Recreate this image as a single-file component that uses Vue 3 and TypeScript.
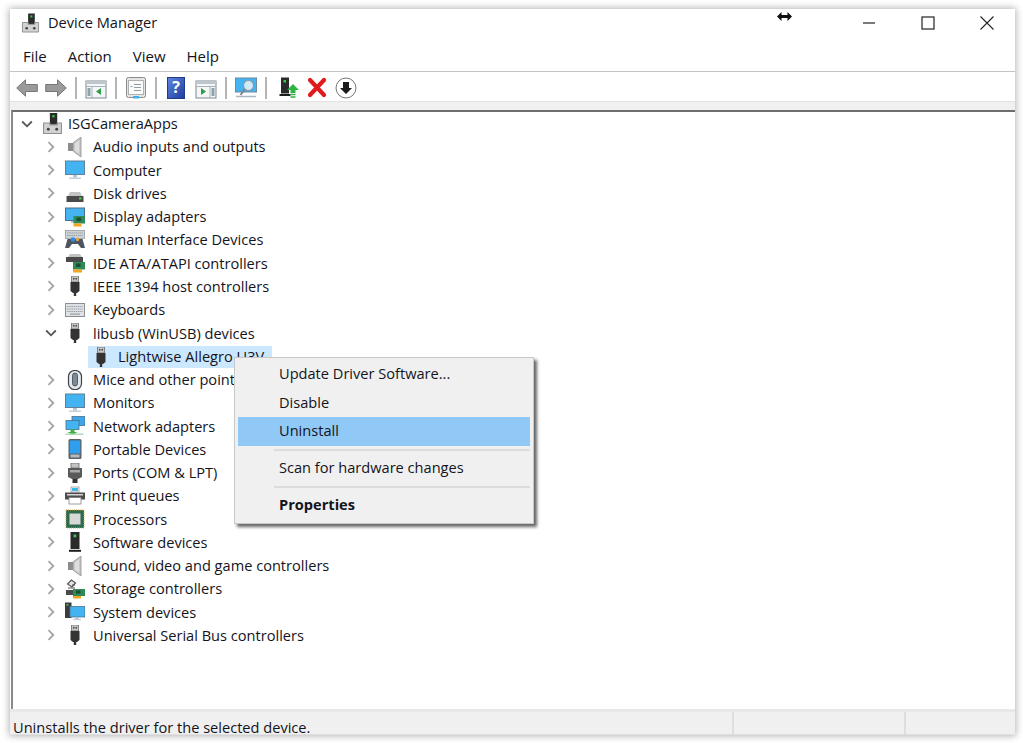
<script setup lang="ts">
interface Row { label: string; icon: string; level: number; open?: boolean; selected?: boolean }
const rows: Row[] = [
  { label: 'ISGCameraApps', icon: 'pc', level: 0, open: true },
  { label: 'Audio inputs and outputs', icon: 'speaker', level: 1 },
  { label: 'Computer', icon: 'monitor', level: 1 },
  { label: 'Disk drives', icon: 'disk', level: 1 },
  { label: 'Display adapters', icon: 'display', level: 1 },
  { label: 'Human Interface Devices', icon: 'hid', level: 1 },
  { label: 'IDE ATA/ATAPI controllers', icon: 'ide', level: 1 },
  { label: 'IEEE 1394 host controllers', icon: 'usb', level: 1 },
  { label: 'Keyboards', icon: 'keyboard', level: 1 },
  { label: 'libusb (WinUSB) devices', icon: 'usb', level: 1, open: true },
  { label: 'Lightwise Allegro U3V', icon: 'usb', level: 2, selected: true },
  { label: 'Mice and other pointing devices', icon: 'mouse', level: 1 },
  { label: 'Monitors', icon: 'monitor', level: 1 },
  { label: 'Network adapters', icon: 'network', level: 1 },
  { label: 'Portable Devices', icon: 'portable', level: 1 },
  { label: 'Ports (COM & LPT)', icon: 'ports', level: 1 },
  { label: 'Print queues', icon: 'printer', level: 1 },
  { label: 'Processors', icon: 'cpu', level: 1 },
  { label: 'Software devices', icon: 'software', level: 1 },
  { label: 'Sound, video and game controllers', icon: 'speaker', level: 1 },
  { label: 'Storage controllers', icon: 'storage', level: 1 },
  { label: 'System devices', icon: 'system', level: 1 },
  { label: 'Universal Serial Bus controllers', icon: 'usb', level: 1 },
]
const menus = ['File', 'Action', 'View', 'Help']
const tools = [
  { icon: 't-back' }, { icon: 't-fwd', cls: 'ml1' }, { sep: true },
  { icon: 't-panel' }, { sep: true },
  { icon: 't-props' }, { sep: true },
  { icon: 't-help' }, { icon: 't-panel2', cls: 'ml2' }, { sep: true },
  { icon: 't-scan' }, { sep: true },
  { icon: 't-update', cls: 'ml3' }, { icon: 't-x' }, { icon: 't-down', cls: 'ml1' },
]
</script>

<template>
  <div class="page">
    <svg width="0" height="0" class="defs">
      <defs>
        <linearGradient id="helpg" x1="0" y1="0" x2="1" y2="1">
          <stop offset="0" stop-color="#5f86e0"/><stop offset="1" stop-color="#1d3c9c"/>
        </linearGradient>
        <symbol id="pc" viewBox="0 0 20 20">
          <rect x="7.500" y="0" width="7" height="11" fill="#2b2b2b"/><rect x="9.800" y="2" width="2.200" height="2.200" fill="#35c24a"/>
          <path d="M1.500 9.500h6v2h7v-2h4v10h-17z" fill="#d2d2d2" stroke="#8f8f8f"/><circle cx="6" cy="15.500" r="1.400" fill="#444"/><circle cx="14" cy="15.500" r="1.400" fill="#444"/>
        </symbol>
        <symbol id="speaker" viewBox="0 0 20 20">
          <rect x="3" y="6" width="5" height="8" fill="#8d8d8d"/><path d="M8 6l8-6v20l-8-6z" fill="#c9c9c9" stroke="#8e8e8e" stroke-width=".8"/><path d="M10 6.500l4-3v13l-4-3z" fill="#dedede"/>
        </symbol>
        <symbol id="monitor" viewBox="0 0 20 20">
          <rect x="0" y="0.500" width="20" height="14.500" fill="#5f819a"/><rect x="1" y="1.500" width="18" height="12.500" fill="#44b3f2"/>
          <rect x="8" y="15" width="4" height="2.500" fill="#b9c6cf"/><rect x="4" y="17.500" width="12" height="1.500" fill="#c6d0d6"/>
        </symbol>
        <symbol id="disk" viewBox="0 0 20 20">
          <path d="M3 13l2-4h10l2 4z" fill="#c4c4c4"/><path d="M1.500 13h17v6h-17z" fill="#4a4a4a"/><rect x="14" y="14.500" width="2.500" height="2" fill="#3ed04e"/>
        </symbol>
        <symbol id="display" viewBox="0 0 20 20">
          <rect x="0" y="0.500" width="20" height="13.500" fill="#4a6d88"/><rect x="1" y="1.500" width="18" height="11.500" fill="#44b3f2"/><rect x="6" y="14" width="4" height="2" fill="#b9c6cf"/>
          <rect x="8.500" y="9" width="11.500" height="7.500" fill="#2f8a58"/><rect x="11.500" y="10.500" width="4.500" height="3.500" fill="#1a4f33"/><rect x="8.500" y="16.500" width="8" height="3" fill="#f2a51e"/>
        </symbol>
        <symbol id="hid" viewBox="0 0 20 20">
          <rect x="0.500" y="0.500" width="19" height="8" fill="#cdd2d6" stroke="#8b9097" stroke-width=".7"/><path d="M2 3h16M2 5.500h16" stroke="#9aa0a6" stroke-dasharray="1.500 .7"/>
          <path d="M0 18l2.500-9h15l2.500 9h-4l-3-4H7l-3 4z" fill="#4d5660"/><circle cx="8" cy="9.500" r="2.300" fill="#2f8ce0"/><circle cx="12.500" cy="9.500" r="1.700" fill="#e6a23c"/>
        </symbol>
        <symbol id="ide" viewBox="0 0 20 20">
          <path d="M3 4l2-3h10l2 3z" fill="#c2c2c2"/><rect x="1" y="4" width="17" height="5" fill="#4a4a4a"/>
          <rect x="8" y="9" width="12" height="7.500" fill="#2f8a58"/><rect x="11" y="10.500" width="4.500" height="3.500" fill="#1a4f33"/><rect x="8" y="16.500" width="9" height="3" fill="#f2a51e"/>
        </symbol>
        <symbol id="usb" viewBox="0 0 20 20">
          <rect x="6.500" y="0" width="7" height="6" fill="#c4c4c4" stroke="#6f6f6f" stroke-width=".8"/><rect x="8" y="2" width="1.500" height="1.500" fill="#444"/><rect x="10.500" y="2" width="1.500" height="1.500" fill="#444"/>
          <path d="M5.500 6h9v9l-2.500 2H8l-2.500-2z" fill="#333"/><rect x="8.800" y="17" width="2.400" height="3" fill="#333"/>
        </symbol>
        <symbol id="keyboard" viewBox="0 0 20 20">
          <rect x="0.500" y="3.500" width="19" height="13" fill="#dfe2e5" stroke="#8c9096"/>
          <path d="M2 6.500h16M2 9h16M2 11.500h16" stroke="#9aa0a6" stroke-dasharray="1.500 .7"/><rect x="5" y="13.500" width="10" height="1.200" fill="#9aa0a6"/>
        </symbol>
        <symbol id="mouse" viewBox="0 0 20 20">
          <rect x="3.500" y="0.500" width="13" height="19" rx="6" fill="#e5e8ea" stroke="#3e444b" stroke-width="1.200"/>
          <rect x="7.500" y="3" width="5" height="13" rx="2.500" fill="#7b8a99" stroke="#3e444b" stroke-width=".8"/>
        </symbol>
        <symbol id="network" viewBox="0 0 20 20">
          <rect x="7" y="0.500" width="13" height="9" fill="#3fa4e8" stroke="#46708e" stroke-width=".8"/>
          <rect x="1" y="4.500" width="13" height="9" fill="#44b3f2" stroke="#46708e" stroke-width=".8"/>
          <path d="M5.500 13.500h4v2.500h3l-5 3-5-3h3z" fill="#3cb54a"/><rect x="0.500" y="17.500" width="18" height="1.500" fill="#b4d8b8"/>
        </symbol>
        <symbol id="portable" viewBox="0 0 20 20">
          <rect x="3.500" y="0" width="13" height="20" rx="1.500" fill="#5b6268"/><rect x="4.800" y="1.500" width="10.400" height="13" fill="#2f9eef"/><rect x="5.500" y="15.500" width="9" height="3" fill="#b5bbc0"/>
        </symbol>
        <symbol id="ports" viewBox="0 0 20 20">
          <rect x="6" y="0" width="8" height="5" fill="#c4c4c4" stroke="#666" stroke-width=".8"/>
          <path d="M3 5h14v9l-4 2H7l-4-2z" fill="#5a5a5a"/><rect x="5" y="7" width="10" height="2.500" fill="#a8a8a8"/><rect x="7.500" y="16" width="5" height="4" fill="#333"/>
        </symbol>
        <symbol id="printer" viewBox="0 0 20 20">
          <rect x="6" y="1" width="8" height="5" fill="#fff" stroke="#8b8b8b" stroke-width=".7"/><rect x="7" y="2" width="6" height="3" fill="#3cb9e8"/>
          <path d="M0 6.500h20v7H0z" fill="#4d4d4d"/><rect x="2" y="8" width="16" height="1.500" fill="#d5d5d5"/><rect x="4" y="11.500" width="12" height="6.500" fill="#fff" stroke="#777" stroke-width=".7"/>
        </symbol>
        <symbol id="cpu" viewBox="0 0 20 20">
          <rect x="1" y="1" width="18" height="18" fill="#2d6b4e" stroke="#d1a64e" stroke-width="1" stroke-dasharray="1 1"/><rect x="4.500" y="4.500" width="11" height="11" fill="#d7d8d8"/>
        </symbol>
        <symbol id="software" viewBox="0 0 20 20">
          <rect x="5.500" y="0" width="9" height="17" fill="#2a2a2a"/><rect x="8.500" y="2.500" width="2.800" height="2.800" fill="#37c94b"/><rect x="4" y="17.800" width="12" height="2" fill="#1f1f1f"/>
        </symbol>
        <symbol id="storage" viewBox="0 0 20 20">
          <path d="M2.500 5l4-4 4 3-3.500 4z" fill="#e4e4e4" stroke="#555" stroke-width="1.200"/><path d="M7 6h3M3 9h7" stroke="#555" stroke-width="1.200"/>
          <rect x="1" y="11" width="8" height="5" fill="#4a4a4a"/><rect x="8" y="10" width="12" height="7" fill="#2f8a58"/><rect x="11" y="11.500" width="4.500" height="3" fill="#1a4f33"/><rect x="8" y="17" width="8" height="2.500" fill="#f2a51e"/>
        </symbol>
        <symbol id="system" viewBox="0 0 20 20">
          <rect x="0" y="0.500" width="6.500" height="15.500" fill="#3c3c3c"/><rect x="1.500" y="2" width="1.800" height="1.800" fill="#39c84c"/>
          <rect x="5" y="4.500" width="15" height="10.500" fill="#44b3f2" stroke="#4a7392" stroke-width=".8"/><rect x="10" y="15" width="4" height="2" fill="#b9c6cf"/><rect x="8" y="17" width="8" height="1.200" fill="#c6d0d6"/>
        </symbol>

        <symbol id="t-back" viewBox="0 0 22 22">
          <path d="M.7 11L9.500 2.800v4.700h11.800v7H9.500v4.700z" fill="#9a9a9a" stroke="#767676"/>
        </symbol>
        <symbol id="t-fwd" viewBox="0 0 22 22">
          <path d="M21.300 11L12.500 2.800v4.700H.7v7h11.800v4.700z" fill="#9a9a9a" stroke="#767676"/>
        </symbol>
        <symbol id="t-panel" viewBox="0 0 22 22">
          <rect x="1" y="4" width="20" height="17" fill="#f4f6f7" stroke="#7d8a92"/><rect x="1" y="4" width="20" height="3" fill="#bcc6cc"/>
          <path d="M1 9.500h20M7 9.500V21" stroke="#a9b4ba"/><rect x="2.500" y="11" width="3" height="8" fill="#8ea2ae"/><path d="M16 11v7l-5-3.500z" fill="#2e9f48"/>
        </symbol>
        <symbol id="t-panel2" viewBox="0 0 22 22">
          <rect x="1" y="4" width="20" height="17" fill="#f4f6f7" stroke="#7d8a92"/><rect x="1" y="4" width="20" height="3" fill="#bcc6cc"/>
          <path d="M1 9.500h20M15 9.500V21" stroke="#a9b4ba"/><rect x="16.500" y="11" width="3" height="8" fill="#8ea2ae"/><path d="M6 11v7l5-3.500z" fill="#2e9f48"/>
        </symbol>
        <symbol id="t-props" viewBox="0 0 22 22">
          <rect x="1.500" y="0.500" width="19" height="20" rx="2" fill="#e6e6e6" stroke="#8a8a8a"/><rect x="3.500" y="3.500" width="15" height="14" fill="#fbfbfb" stroke="#b0b0b0"/>
          <path d="M9 7.500h7M9 10.500h7M9 13.500h7M5.500 9.500h2" stroke="#8e9ea8"/><rect x="8" y="19" width="6" height="2.500" fill="#3fb0f0"/>
        </symbol>
        <symbol id="t-help" viewBox="0 0 22 22">
          <rect x="2.500" y="0.500" width="17" height="21" fill="url(#helpg)" stroke="#1e3a8c"/>
        </symbol>
        <symbol id="t-scan" viewBox="0 0 22 22">
          <rect x="0.500" y="1" width="21" height="14" fill="#44b3f2" stroke="#6a8ba1"/>
          <circle cx="13.500" cy="8.500" r="5" fill="#cdebfb" stroke="#8a979f" stroke-width="1.100"/><path d="M10 12L5.500 18" stroke="#7a868e" stroke-width="2"/><path d="M1 19.500h20" stroke="#a8b8c2" stroke-width="1.500"/>
        </symbol>
        <symbol id="t-update" viewBox="0 0 22 22">
          <rect x="3" y="0.500" width="8" height="16" fill="#2a2a2a"/><rect x="5.500" y="3" width="2.500" height="2.500" fill="#37c94b"/><rect x="1.500" y="17" width="11" height="2" fill="#1f1f1f"/>
          <path d="M15 7l6 6h-3.500v3h-5v-3H9z" fill="#2fb344"/><path d="M12.500 17.500h5M12.500 20h5" stroke="#2fb344" stroke-width="1.500"/>
        </symbol>
        <symbol id="t-x" viewBox="0 0 22 22">
          <path d="M4 3l14 15M18 3L4 18" stroke="#e01b1b" stroke-width="4.200" stroke-linecap="round"/>
        </symbol>
        <symbol id="t-down" viewBox="0 0 22 22">
          <circle cx="11" cy="11" r="10" fill="#fff" stroke="#777"/><path d="M8 5h6v6h3l-6 6-6-6h3z" fill="#1a1a1a"/>
        </symbol>
      </defs>
    </svg>

    <div class="window">
      <header class="title">
        <svg class="title-icon"><use href="#pc"/></svg>
        <span class="title-text">Device Manager</span>
        <div class="controls">
          <svg width="14" height="14" viewBox="0 0 14 14"><path d="M1 7h12" stroke="#222" stroke-width="1.200"/></svg>
          <svg width="14" height="14" viewBox="0 0 14 14"><rect x="1" y="1" width="12" height="12" fill="none" stroke="#222" stroke-width="1.200"/></svg>
          <svg width="14" height="14" viewBox="0 0 14 14"><path d="M.5.500l13 13M13.500.500l-13 13" stroke="#222" stroke-width="1.100"/></svg>
        </div>
      </header>
      <nav class="menubar">
        <span v-for="m in menus" :key="m">{{ m }}</span>
      </nav>
      <div class="toolbar">
        <template v-for="(t, i) in tools" :key="i">
          <i v-if="t.sep" class="sep"></i>
          <span v-else class="tool" :class="t.cls">
            <svg width="22" height="22"><use :href="'#' + t.icon"/></svg>
            <b v-if="t.icon === 't-help'" class="q">?</b>
          </span>
        </template>
      </div>
      <div class="band"></div>
      <main class="tree">
        <div v-for="r in rows" :key="r.label" class="row" :class="'lv' + r.level">
          <svg v-if="r.level < 2" class="chev" width="12" height="12" viewBox="0 0 12 12">
            <path v-if="r.open" d="M1.200 3.500L6 8.300l4.800-4.800" fill="none" stroke="#555" stroke-width="1.800"/>
            <path v-else d="M3.500 1.200L8.300 6l-4.800 4.800" fill="none" stroke="#a6a6a6" stroke-width="1.900"/>
          </svg>
          <div class="cell" :class="{ selected: r.selected }">
            <svg class="ico"><use :href="'#' + r.icon"/></svg>
            <span class="label">{{ r.label }}</span>
          </div>
        </div>
      </main>
      <footer class="status">
        <span class="msg">Uninstalls the driver for the selected device.</span>
        <i class="pane"></i>
        <i class="pane last"></i>
      </footer>

      <div class="ctx">
        <div class="ctx-item">Update Driver Software...</div>
        <div class="ctx-item">Disable</div>
        <div class="ctx-item active">Uninstall</div>
        <div class="ctx-sep"></div>
        <div class="ctx-item">Scan for hardware changes</div>
        <div class="ctx-sep"></div>
        <div class="ctx-item strong">Properties</div>
      </div>

      <svg class="cursor" width="15" height="9" viewBox="0 0 15 9">
        <path d="M0 4.500L4.500 0v3h6V0L15 4.500 10.500 9V6h-6v3z" fill="#111"/>
      </svg>
    </div>
  </div>
</template>

<style>
html, body { margin: 0; background: #fff; }
</style>

<style scoped>
.page {
  width: 1023px;
  height: 743px;
  box-sizing: border-box;
  padding: 9px 8px 8px 10px;
  background: #fff;
  font-family: "Open Sans", "Noto Sans", sans-serif;
  font-size: 14.6px;
  color: #14141c;
  overflow: hidden;
}
.defs { position: absolute; }
.window {
  position: relative;
  height: 100%;
  display: flex;
  flex-direction: column;
  background: #fff;
  box-shadow: 0 0 7px 1px rgba(0, 0, 0, .3);
}
.title {
  height: 27px;
  flex: none;
  display: flex;
  align-items: center;
  padding-left: 11px;
  gap: 8px;
}
.title-icon { width: 19px; height: 20px; }
.title-text { padding-bottom: 1px; }
.controls {
  margin-left: auto;
  display: flex;
  align-items: center;
  gap: 45px;
  padding-right: 21px;
  height: 100%;
}
.menubar {
  height: 29px;
  flex: none;
  margin-top: 5px;
  display: flex;
  align-items: center;
  gap: 21px;
  padding: 0 0 1px 13px;
  border-bottom: 1px solid #c4c4c4;
  font-size: 15px;
}
.toolbar {
  height: 29px;
  flex: none;
  display: flex;
  align-items: center;
  padding: 2px 0 0 3px;
  box-sizing: border-box;
}
.tool {
  position: relative;
  width: 28px;
  height: 22px;
  display: flex;
  justify-content: center;
  align-items: center;
}
.ml1 { margin-left: 1px; }
.ml2 { margin-left: 2px; }
.ml3 { margin-left: 3px; }
.q {
  position: absolute;
  left: 0;
  right: 0;
  top: -1px;
  text-align: center;
  color: #fff;
  font-size: 16px;
  line-height: 22px;
  font-weight: 700;
}
.sep {
  width: 2px;
  height: 22px;
  margin: 0 5px;
  background: #b4b4b4;
}
.band {
  height: 9px;
  flex: none;
  background: #f0f0f0;
  border-top: 1px solid #e2e2e2;
  box-sizing: border-box;
}
.tree {
  flex: 1;
  min-height: 0;
  border-top: 2px solid #6e6e6e;
  border-left: 2px solid #8a8a8a;
  margin-left: 1px;
}
.row {
  height: 23.27px;
  display: flex;
  align-items: center;
}
.chev { flex: none; }
.lv0 { padding-left: 8px; }
.lv1 { padding-left: 32px; }
.lv2 { padding-left: 75px; }
.cell {
  display: flex;
  align-items: center;
  height: 100%;
}
.lv0 .cell { margin-left: 9px; }
.lv1 .cell { margin-left: 8px; }
.ico { width: 20px; height: 20px; flex: none; }
.label { margin-left: 8px; padding-bottom: 1px; white-space: nowrap; }
.lv0 .ico { width: 21px; height: 21px; }
.lv0 .label { margin-left: 5px; padding-bottom: 2px; }
.lv2 .cell { padding: 0 3px; }
.selected {
  background: #cce8ff;
  width: 184px;
  height: 22px;
  align-self: flex-end;
  box-sizing: border-box;
  overflow: hidden;
}
.selected .label { margin-left: 7px; padding-bottom: 2px; }
.status {
  height: 23px;
  flex: none;
  display: flex;
  align-items: stretch;
  background: #f0f0f0;
  border-top: 3px solid #e8e8e8;
  box-shadow: inset 0 -1px #e0e0e0;
  padding-left: 3px;
}
.msg { width: 719px; flex: none; padding-top: 7px; line-height: 16px; }
.pane { width: 2px; background: #dedede; flex: none; }
.pane.last { margin-left: 170px; }
.ctx {
  position: absolute;
  left: 224px;
  top: 348px;
  width: 300px;
  box-sizing: border-box;
  height: 167px;
  padding: 2px 3px;
  background: #f0f0f0;
  border: 1px solid #c8c8c8;
  box-shadow: 3px 3px 3px rgba(0, 0, 0, .6);
}
.ctx-item {
  height: 28.5px;
  line-height: 27px;
  padding-left: 41px;
}
.ctx-item.active { background: #90c8f6; }
.ctx-item.strong { font-weight: 700; }
.ctx-sep {
  height: 2px;
  margin: 3px 0 3.5px 36px;
  background: #dcdcdc;
}
.cursor {
  position: absolute;
  left: 767px;
  top: 3px;
}
</style>
